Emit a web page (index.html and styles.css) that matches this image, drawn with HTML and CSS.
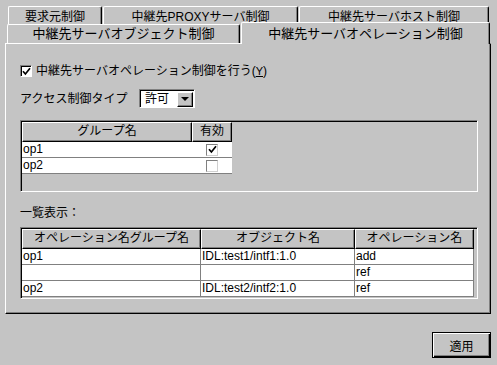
FILE: index.html
```html
<!DOCTYPE html>
<html lang="ja">
<head>
<meta charset="utf-8">
<title>中継先サーバオペレーション制御</title>
<link rel="stylesheet" href="styles.css">
</head>
<body>
<div class="window">
  <div class="tabs">
    <div class="tabrow back">
      <div class="tab t1">要求元制御</div>
      <div class="tab t2">中継先PROXYサーバ制御</div>
      <div class="tab t3">中継先サーバホスト制御</div>
    </div>
    <div class="tabrow front">
      <div class="tab t4">中継先サーバオブジェクト制御</div>
      <div class="tab t5">中継先サーバオペレーション制御</div>
    </div>
  </div>
  <div class="panel">
    <div class="check-row">
      <span class="cb"><svg width="9" height="9" viewBox="0 0 9 9"><path d="M1 4.2 L3.4 7 L8 1.2" fill="none" stroke="#000" stroke-width="1.7"/></svg></span>
      <span class="check-label">中継先サーバオペレーション制御を行う(<span class="mn">Y</span>)</span>
    </div>
    <div class="access">
      <span class="access-label">アクセス制御タイプ</span>
      <div class="combo">
        <span class="combo-text">許可</span>
        <span class="combo-btn"><span class="tri"></span></span>
      </div>
    </div>
    <div class="frame">
      <div class="g-table">
        <div class="th">グループ名</div>
        <div class="th">有効</div>
        <div class="td">op1</div>
        <div class="td center"><span class="cell-cb"><svg width="9" height="9" viewBox="0 0 9 9"><path d="M1 4.2 L3.4 7 L8 1.2" fill="none" stroke="#000" stroke-width="1.7"/></svg></span></div>
        <div class="td">op2</div>
        <div class="td center"><span class="cell-cb"></span></div>
      </div>
    </div>
    <div class="list-label">一覧表示：</div>
    <div class="frame">
      <div class="o-table">
        <div class="th">オペレーション名グループ名</div>
        <div class="th">オブジェクト名</div>
        <div class="th">オペレーション名</div>
        <div class="td grid">op1</div>
        <div class="td grid">IDL:test1/intf1:1.0</div>
        <div class="td grid">add</div>
        <div class="td grid"></div>
        <div class="td grid"></div>
        <div class="td grid">ref</div>
        <div class="td grid">op2</div>
        <div class="td grid">IDL:test2/intf2:1.0</div>
        <div class="td grid">ref</div>
      </div>
    </div>
  </div>
  <div class="footer">
    <button class="btn" type="button">適用</button>
  </div>
</div>
</body>
</html>
```
FILE: styles.css
```css
* { box-sizing: border-box; }

body {
  margin: 0;
  background: #c4c4c4;
  font-family: "Liberation Sans", "Noto Sans CJK JP", sans-serif;
  font-size: 12px;
  color: #000;
}

.window {
  width: 497px;
  height: 365px;
  overflow: hidden;
}

/* tabs */
.tabs {
  padding-top: 6px;
  height: 43px;
}

.tabrow {
  display: flex;
  gap: 1px;
}

.tab {
  background: #c4c4c4;
  border-top: 1px solid #fff;
  border-left: 1px solid #fff;
  border-right: 1px solid #000;
  box-shadow: inset -1px 0 0 #808080;
  border-top-left-radius: 2px;
  border-top-right-radius: 2px;
  text-align: center;
  line-height: 14px;
  white-space: nowrap;
  overflow: hidden;
}

.back {
  margin-left: 8px;
  height: 18px;
}

.back .tab {
  height: 18px;
  padding-top: 3px;
}

.t1 { width: 94px; }
.t2 { width: 195px; }
.t3 { width: 190px; }

.front {
  margin-left: 7px;
  height: 19px;
  align-items: flex-end;
  font-size: 13px;
}

.t4 {
  width: 233px;
  height: 19px;
  padding-top: 2px;
}

.t5 {
  width: 249px;
  height: 22px;
  padding-top: 4px;
  margin-bottom: -1px;
  position: relative;
  z-index: 1;
}

/* panel */
.panel {
  margin-left: 5px;
  width: 486px;
  height: 271px;
  border-top: 1px solid #fff;
  border-left: 1px solid #fff;
  border-right: 1px solid #000;
  border-bottom: 1px solid #000;
  box-shadow: inset -1px -1px 0 #808080;
  padding: 20px 0 0 14px;
}

.check-row {
  display: flex;
  align-items: center;
  height: 14px;
  gap: 4px;
}

.check-label {
  font-size: 12px;
  line-height: 14px;
}

.mn {
  text-decoration: underline;
  font-size: 11px;
}

.cb {
  width: 12px;
  height: 12px;
  background: #fff;
  border: 1px solid;
  border-color: #808080 #fff #fff #808080;
  box-shadow: inset 1px 1px 0 #000;
  display: flex;
  align-items: center;
  justify-content: center;
  padding: 1px 0 0 1px;
}

.cb svg { display: block; }

.access {
  display: flex;
  align-items: center;
  height: 19px;
  margin-top: 11px;
}

.access-label {
  width: 119px;
  line-height: 14px;
}

.combo {
  width: 56px;
  height: 19px;
  background: #fff;
  border: 1px solid;
  border-color: #808080 #fff #fff #808080;
  box-shadow: inset 1px 1px 0 #000;
  display: flex;
  align-items: center;
  padding: 1px 0 0 1px;
}

.combo-text {
  flex: 1;
  padding-left: 4px;
  line-height: 14px;
}

.combo-btn {
  width: 16px;
  height: 15px;
  background: #c4c4c4;
  border: 1px solid;
  border-color: #fff #000 #000 #fff;
  box-shadow: inset -1px -1px 0 #808080;
  display: flex;
  align-items: center;
  justify-content: center;
  margin-right: 1px;
}

.tri {
  width: 0;
  height: 0;
  border-left: 4px solid transparent;
  border-right: 4px solid transparent;
  border-top: 4px solid #000;
}

/* tables */
.frame {
  width: 458px;
  height: 72px;
  margin-top: 12px;
  border: 1px solid;
  border-color: #808080 #fff #fff #808080;
  box-shadow: inset 1px 1px 0 #000;
  padding: 1px 0 0 1px;
}

.g-table {
  display: grid;
  grid-template-columns: 170px 40px;
}

.o-table {
  display: grid;
  grid-template-columns: 179px 154px 119px;
}

.th {
  height: 20px;
  border: 1px solid;
  border-color: #fff #000 #000 #fff;
  box-shadow: inset -1px -1px 0 #808080;
  text-align: center;
  line-height: 17px;
  white-space: nowrap;
}

.td {
  height: 16px;
  background: #fff;
  border-bottom: 1px solid #808080;
  line-height: 15px;
  padding-left: 1px;
  white-space: nowrap;
}

.td.grid {
  border-right: 1px solid #808080;
}

.td.center {
  display: flex;
  align-items: center;
  justify-content: center;
  padding-left: 0;
}

.cell-cb {
  width: 12px;
  height: 12px;
  border: 1px solid;
  border-color: #808080 #d0d0d0 #d0d0d0 #808080;
  background: #fff;
  display: flex;
  align-items: center;
  justify-content: center;
}

.cell-cb svg { display: block; }

.list-label {
  margin-top: 14px;
  line-height: 14px;
}

.list-label + .frame {
  margin-top: 7px;
}

/* footer */
.footer {
  padding: 18px 0 0 432px;
}

.btn {
  width: 59px;
  height: 26px;
  padding: 0;
  border: 1px solid #000;
  background: #c4c4c4;
  box-shadow: inset 1px 1px 0 #fff, inset -1px -1px 0 #000, inset -2px -2px 0 #808080;
  font: inherit;
  font-size: 12px;
  color: #000;
}
```
